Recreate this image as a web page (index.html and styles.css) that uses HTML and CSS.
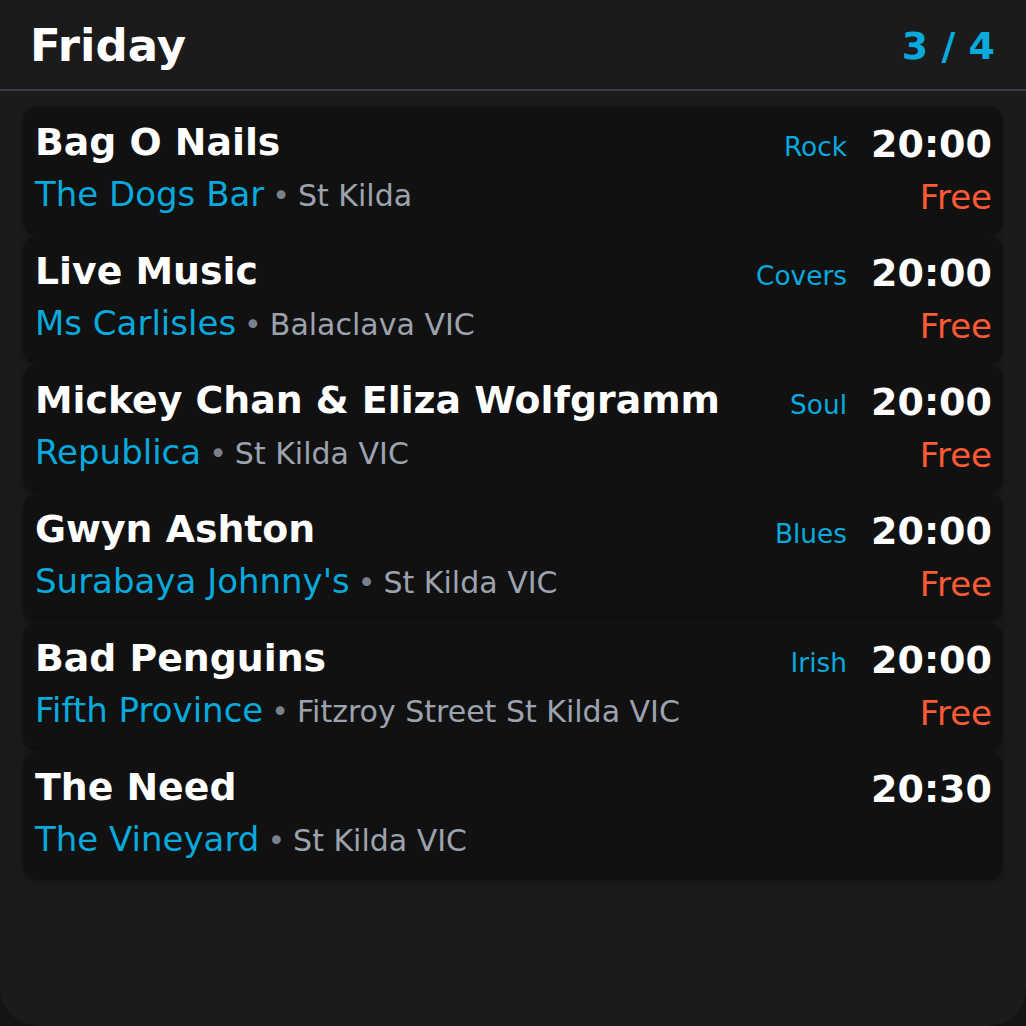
FILE: index.html
```html
<!DOCTYPE html>
<html>
<head>
<meta charset="utf-8">
<link rel="stylesheet" href="styles.css">
</head>
<body>
<div class="screen">
  <header class="header">
    <h1 class="day">Friday</h1>
    <div class="page">3 / 4</div>
  </header>
  <div class="list">
    <div class="card">
      <div class="row1"><span class="title">Bag O Nails</span><span class="right"><span class="genre">Rock</span><span class="time">20:00</span></span></div>
      <div class="row2"><span class="where"><span class="venue">The Dogs Bar</span><span class="dot">•</span><span class="loc">St Kilda</span></span><span class="price">Free</span></div>
    </div>
    <div class="card">
      <div class="row1"><span class="title">Live Music</span><span class="right"><span class="genre">Covers</span><span class="time">20:00</span></span></div>
      <div class="row2"><span class="where"><span class="venue">Ms Carlisles</span><span class="dot">•</span><span class="loc">Balaclava VIC</span></span><span class="price">Free</span></div>
    </div>
    <div class="card">
      <div class="row1"><span class="title">Mickey Chan &amp; Eliza Wolfgramm</span><span class="right"><span class="genre">Soul</span><span class="time">20:00</span></span></div>
      <div class="row2"><span class="where"><span class="venue">Republica</span><span class="dot">•</span><span class="loc">St Kilda VIC</span></span><span class="price">Free</span></div>
    </div>
    <div class="card">
      <div class="row1"><span class="title">Gwyn Ashton</span><span class="right"><span class="genre">Blues</span><span class="time">20:00</span></span></div>
      <div class="row2"><span class="where"><span class="venue">Surabaya Johnny's</span><span class="dot">•</span><span class="loc">St Kilda VIC</span></span><span class="price">Free</span></div>
    </div>
    <div class="card">
      <div class="row1"><span class="title">Bad Penguins</span><span class="right"><span class="genre">Irish</span><span class="time">20:00</span></span></div>
      <div class="row2"><span class="where"><span class="venue">Fifth Province</span><span class="dot">•</span><span class="loc">Fitzroy Street St Kilda VIC</span></span><span class="price">Free</span></div>
    </div>
    <div class="card">
      <div class="row1"><span class="title">The Need</span><span class="right"><span class="time">20:30</span></span></div>
      <div class="row2"><span class="where"><span class="venue">The Vineyard</span><span class="dot">•</span><span class="loc">St Kilda VIC</span></span></div>
    </div>
  </div>
</div>
</body>
</html>
```
FILE: styles.css
```css
html, body {
  margin: 0;
  padding: 0;
  background: #141414;
}
body {
  font-family: "DejaVu Sans", sans-serif;
  width: 1026px;
  height: 1026px;
  overflow: hidden;
}
.screen {
  height: 1026px;
  background: #1b1b1b;
  border-radius: 0 0 38px 38px;
  box-sizing: border-box;
}
.header {
  height: 89px;
  border-bottom: 2px solid #363c48;
  display: flex;
  justify-content: space-between;
  align-items: center;
  padding: 0 31px 0 30px;
  box-sizing: content-box;
}
.day {
  margin: 0;
  font-size: 45px;
  font-weight: bold;
  color: #ffffff;
  line-height: 1;
  position: relative;
  top: 1px;
}
.page {
  font-size: 38px;
  font-weight: bold;
  color: #08a9dc;
  line-height: 1;
  position: relative;
  top: 1px;
}
.list {
  padding: 16px 23px 0;
  display: flex;
  flex-direction: column;
  gap: 1px;
}
.card {
  background: #111111;
  border-radius: 14px;
  height: 128px;
  box-sizing: border-box;
  padding: 11px 11px 0 12px;
  box-shadow: 0 2px 8px rgba(0,0,0,0.25);
}
.row1 {
  display: flex;
  justify-content: space-between;
  align-items: baseline;
  height: 48px;
  line-height: 48px;
}
.title {
  font-size: 37.8px;
  font-weight: bold;
  color: #ffffff;
  white-space: nowrap;
}
.right {
  display: flex;
  align-items: baseline;
}
.genre {
  font-size: 26.4px;
  color: #08a9dc;
  margin-right: 24px;
  position: relative;
  top: 1px;
}
.time {
  font-size: 38px;
  font-weight: bold;
  color: #ffffff;
  position: relative;
  top: 2px;
}
.row2 {
  display: flex;
  justify-content: space-between;
  align-items: baseline;
  height: 60px;
  line-height: 60px;
}
.where {
  white-space: nowrap;
}
.venue {
  font-size: 34px;
  color: #08a9dc;
  position: relative;
  top: -2px;
}
.dot {
  font-size: 30px;
  color: #7b818c;
  margin: 0 8px;
  position: relative;
  top: -2px;
}
.loc {
  font-size: 30px;
  color: #9ca3af;
  position: relative;
  top: -2px;
}
.price {
  font-size: 34px;
  color: #ff5a36;
  position: relative;
  top: 1px;
}
```
